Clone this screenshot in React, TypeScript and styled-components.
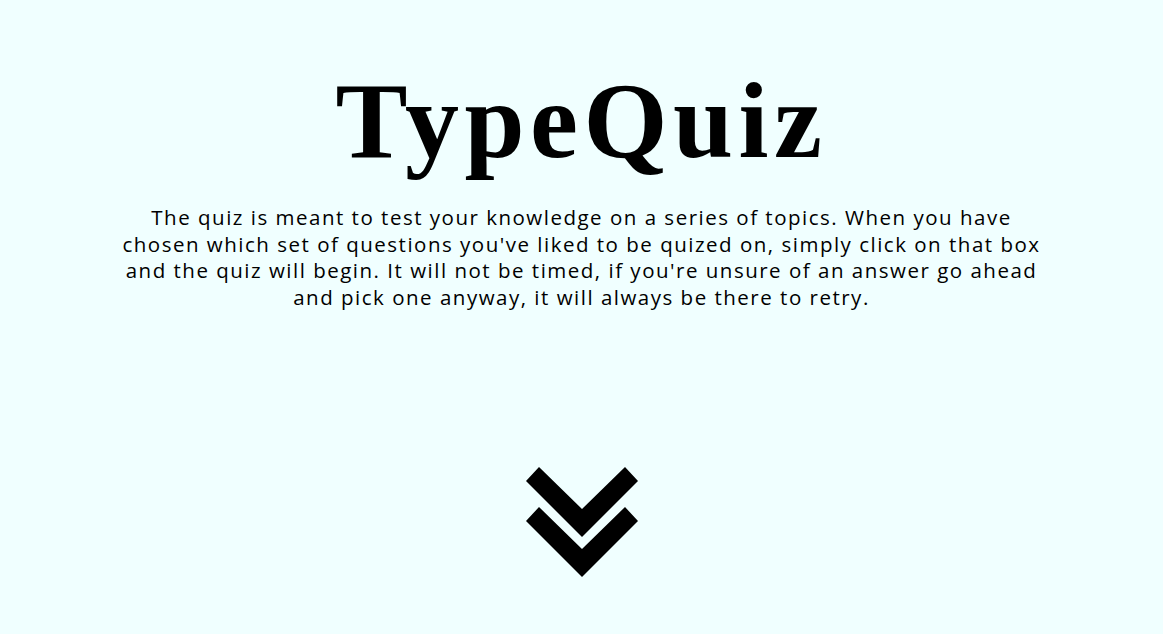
import React from "react";
import styled, { createGlobalStyle } from "styled-components";

const Global = createGlobalStyle`
  html, body { margin: 0; padding: 0; background: #f0ffff; }
  body { font-family: "Open Sans", "Noto Sans", sans-serif; color: #000; }
`;

const Page = styled.main`
  display: flex;
  flex-direction: column;
  align-items: center;
  min-height: 634px;
  background: #f0ffff;
`;

const Title = styled.h1`
  margin: 56px 0 0;
  font-family: "Liberation Serif", "DejaVu Serif", serif;
  font-weight: 700;
  font-size: 108px;
  line-height: 130px;
  letter-spacing: 5.5px;
`;

const Intro = styled.p`
  margin: 18px 0 0;
  width: 930px;
  text-align: center;
  font-size: 20.5px;
  line-height: 26.5px;
  letter-spacing: 1.5px;
`;

const Arrow = styled.svg`
  margin-top: 157px;
  width: 112px;
  height: 110px;
  display: block;
`;

export default function App() {
  return (
    <Page>
      <Global />
      <Title>TypeQuiz</Title>
      <Intro>
        The quiz is meant to test your knowledge on a series of topics. When you have
        chosen which set of questions you've liked to be quized on, simply click on that box
        and the quiz will begin. It will not be timed, if you're unsure of an answer go ahead
        and pick one anyway, it will always be there to retry.
      </Intro>
      <Arrow viewBox="0 0 112 110" aria-label="scroll down">
        <polygon points="13,0 56,42 99,0 112,14 56,70 0,14" fill="#000" />
        <polygon points="13,40 56,82 99,40 112,54 56,110 0,54" fill="#000" />
      </Arrow>
    </Page>
  );
}
